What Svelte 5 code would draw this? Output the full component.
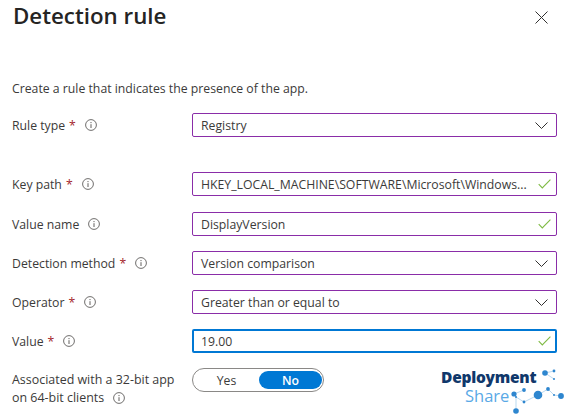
<script>
  const rows = [
    { label: 'Rule type', req: true, value: 'Registry', kind: 'select', cls: 'after-gap' },
    { label: 'Key path', req: true, value: 'HKEY_LOCAL_MACHINE\\SOFTWARE\\Microsoft\\Windows...', kind: 'check', cls: 'after-one' },
    { label: 'Value name', req: false, value: 'DisplayVersion', kind: 'check' },
    { label: 'Detection method', req: true, value: 'Version comparison', kind: 'select' },
    { label: 'Operator', req: true, value: 'Greater than or equal to', kind: 'select' },
    { label: 'Value', req: true, value: '19.00', kind: 'check', focus: true }
  ];
</script>

{#snippet info()}
  <svg class="info" width="12" height="12" viewBox="0 0 12 12" aria-hidden="true">
    <circle cx="6" cy="6" r="5.4" fill="none" stroke="#605e5c" stroke-width="0.9" />
    <circle cx="6" cy="3.6" r="0.65" fill="#605e5c" />
    <path d="M6 5.2V9" stroke="#605e5c" stroke-width="1" fill="none" />
  </svg>
{/snippet}

<main class="blade">
  <header class="head">
    <h1>Detection rule</h1>
    <button class="close" aria-label="Close">
      <svg width="13" height="13" viewBox="0 0 13 13"><path d="M.5.5l12 12M12.5.5l-12 12" stroke="#323130" stroke-width="1" fill="none" /></svg>
    </button>
  </header>

  <p class="intro">Create a rule that indicates the presence of the app.</p>

  <div class="form">
    {#each rows as r}
      <div class="row {r.cls ?? ''}">
        <div class="label">
          <span>{r.label}</span>
          {#if r.req}<span class="star">*</span>{/if}
          {@render info()}
        </div>
        <div class="field" class:focus={r.focus}>
          <span class="val">{r.value}</span>
          {#if r.kind === 'select'}
            <svg class="chev" width="13" height="7" viewBox="0 0 13 7"><path d="M.5.5l6 6 6-6" stroke="#323130" stroke-width="1" fill="none" /></svg>
          {:else}
            <svg class="chk" width="13" height="10" viewBox="0 0 13 10"><path d="M.7 5.2l3.6 3.8L12.4.7" stroke="#7fba44" stroke-width="1.1" fill="none" /></svg>
          {/if}
        </div>
      </div>
    {/each}

    <div class="row last">
      <div class="label multi">
        <span>Associated with a 32-bit app</span>
        <span>on 64-bit clients {@render info()}</span>
      </div>
      <div class="toggle">
        <span class="opt">Yes</span>
        <span class="opt on">No</span>
      </div>
    </div>
  </div>

  <div class="logo">
    <span class="dep">Deployment</span>
    <span class="share">Share</span>
    <svg class="net" width="60" height="50" viewBox="0 0 60 50" aria-hidden="true">
      <g transform="translate(-510 -368)">
        <g stroke="#9cc8ea" stroke-width="0.7" fill="none">
          <path d="M514 394L516 397L516 411M516 397L524 402L538 395L548 389L554 395L561 396M514 394L524 390M545 373L554 371M545 373L554 379" />
        </g>
        <g fill="#2e86cf">
          <circle cx="545" cy="373" r="2.8" />
          <circle cx="554" cy="371" r="1.4" />
          <circle cx="554" cy="379" r="1" />
          <circle cx="514" cy="394" r="2.6" />
          <circle cx="524" cy="390" r="1.9" />
          <circle cx="538" cy="395" r="4.3" />
          <circle cx="548" cy="389" r="1.9" />
          <circle cx="561" cy="396" r="2.9" />
          <circle cx="554" cy="395" r="1" />
          <circle cx="524" cy="402" r="1.4" />
          <circle cx="516" cy="411" r="2.8" />
          <circle cx="516" cy="397" r="1" />
        </g>
      </g>
    </svg>
  </div>
</main>

<style>
  :global(body) {
    margin: 0;
    background: #fff;
  }
  .blade {
    position: relative;
    width: 565px;
    height: 414px;
    overflow: hidden;
    box-sizing: border-box;
    padding: 0 8px 0 12px;
    font-family: "Open Sans", "Noto Sans", sans-serif;
    font-size: 12.25px;
    color: #3b3a39;
  }
  .head {
    display: flex;
    align-items: center;
    justify-content: space-between;
    height: 32px;
  }
  h1 {
    margin: 0;
    font-size: 22.3px;
    font-weight: 600;
    color: #252423;
    line-height: 32px;
    padding-left: 1px;
  }
  .close {
    background: none;
    border: 0;
    padding: 0;
    margin: 2px 9px 0 0;
    display: flex;
  }
  .intro {
    margin: 48px 0 0;
    line-height: 18px;
  }
  .form {
    display: flex;
    flex-direction: column;
    gap: 15px;
    margin-top: 15px;
  }
  .row {
    display: flex;
    align-items: center;
    height: 24px;
  }
  .row.after-gap {
    margin-bottom: 20px;
  }
  .row.after-one {
    margin-bottom: 1px;
  }
  .label {
    width: 180px;
    flex: none;
    display: flex;
    align-items: center;
    gap: 4px;
  }
  .star {
    color: #a4262c;
  }
  .info {
    margin-left: 5px;
  }
  .field {
    flex: 1;
    height: 24px;
    box-sizing: border-box;
    border: 1px solid #8a2da8;
    border-radius: 2px;
    display: flex;
    align-items: center;
    justify-content: space-between;
    padding: 0 5px 0 8px;
  }
  .field.focus {
    border: 2px solid #0078d4;
    padding: 0 4px 0 7px;
  }
  .chev {
    margin-right: 3px;
  }
  .last {
    align-items: flex-start;
  }
  .multi {
    flex-direction: column;
    align-items: flex-start;
    gap: 0;
    padding-top: 3px;
    line-height: 18px;
    font-size: 12.45px;
  }
  .multi span {
    display: inline-flex;
    align-items: center;
    gap: 4px;
  }
  .toggle {
    width: 132px;
    height: 24px;
    box-sizing: border-box;
    border: 1px solid #8a8886;
    border-radius: 12px;
    padding: 2px 1px;
    display: flex;
  }
  .opt {
    flex: 1;
    display: flex;
    align-items: center;
    justify-content: center;
    border-radius: 10px;
  }
  .opt.on {
    background: #0078d4;
    color: #fff;
    font-weight: 600;
    flex: none;
    width: 63px;
  }
  .logo {
    position: absolute;
    left: 0;
    top: 0;
    width: 100%;
    height: 100%;
    pointer-events: none;
  }
  .dep {
    position: absolute;
    left: 441px;
    top: 369px;
    font-family: "Open Sans", sans-serif;
    font-size: 15.5px;
    font-weight: 800;
    letter-spacing: -0.25px;
    color: #10386b;
    line-height: 17px;
  }
  .share {
    position: absolute;
    left: 465px;
    top: 387px;
    font-family: "Open Sans", sans-serif;
    font-size: 16.5px;
    font-weight: 400;
    color: #5aa9e6;
    line-height: 18px;
  }
  .net {
    position: absolute;
    left: 510px;
    top: 368px;
  }
</style>
